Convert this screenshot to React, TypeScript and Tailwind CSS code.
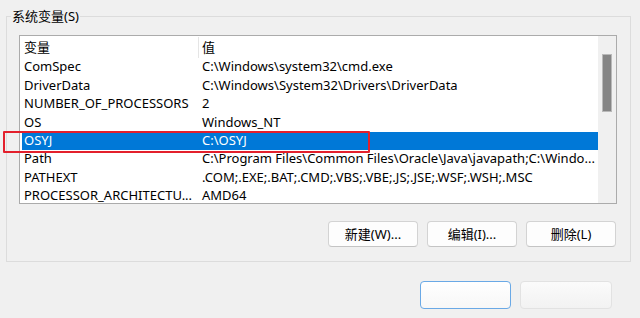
const rows: [string, string][] = [
  ['ComSpec', 'C:\\Windows\\system32\\cmd.exe'],
  ['DriverData', 'C:\\Windows\\System32\\Drivers\\DriverData'],
  ['NUMBER_OF_PROCESSORS', '2'],
  ['OS', 'Windows_NT'],
  ['OSYJ', 'C:\\OSYJ'],
  ['Path', 'C:\\Program Files\\Common Files\\Oracle\\Java\\javapath;C:\\Windo...'],
  ['PATHEXT', '.COM;.EXE;.BAT;.CMD;.VBS;.VBE;.JS;.JSE;.WSF;.WSH;.MSC'],
  ['PROCESSOR_ARCHITECTU...', 'AMD64'],
]

function DlgButton({ label }: { label: string }) {
  return (
    <button className="w-[90px] h-[26px] bg-[#fdfdfd] border border-[#d3d3d3] border-b-[#c4c4c4] rounded-[4px] text-[13px] text-black leading-none">
      {label}
    </button>
  )
}

export default function App() {
  return (
    <div className="relative w-[640px] h-[318px] overflow-hidden bg-[#f0f0f0] pt-[16px] pl-[6px] text-[13px] text-black [font-family:'Noto_Sans','Noto_Sans_CJK_SC',sans-serif]">
      {/* group box */}
      <div className="relative w-[625px] h-[246px] border border-[#dcdcdc] pt-[18px] pl-[12px] pr-[13px]">
        <span className="absolute left-[4px] top-[-10px] px-[1px] bg-[#f0f0f0] leading-[18px]">
          系统变量(S)
        </span>

        <div className="flex h-[169px] border border-[#ababab] bg-white overflow-hidden">
          <div className="flex-1 pl-[2px]">
            <div className="flex h-[22px] items-center pt-[1px]">
              <div className="w-[177px] h-full flex items-center pl-[2px] border-r border-[#e5e5e5]">变量</div>
              <div className="pl-[3px]">值</div>
            </div>
            {rows.map(([name, value]) => {
              const sel = name === 'OSYJ'
              return (
                <div
                  key={name}
                  className={`flex h-[18.4px] items-center whitespace-nowrap ${
                    sel ? 'bg-[#0078d7] text-white' : ''
                  }`}
                >
                  <div className="w-[177px] pl-[2px]">{name}</div>
                  <div className="pl-[3px]">{value}</div>
                </div>
              )
            })}
          </div>
          <div className="w-[18px] bg-[#f0f0f0] pt-[18px] flex justify-center">
            <div className="w-[10px] h-[58px] bg-[#858585] border border-[#b9b9b9]" />
          </div>
        </div>

        <div className="flex justify-end gap-[9px] mt-[17px] pr-[1px]">
          <DlgButton label="新建(W)..." />
          <DlgButton label="编辑(I)..." />
          <DlgButton label="删除(L)" />
        </div>
      </div>

      {/* OK / Cancel (cut off) */}
      <div className="flex justify-end gap-[9px] mt-[19px] pr-[28px]">
        <div className="w-[91px] h-[28px] rounded-[4px] border-[1.5px] border-[#6aa9e6] bg-gradient-to-b from-white to-[#f7f7f7]" />
        <div className="w-[92px] h-[28px] rounded-[4px] border border-[#e2e2e2] bg-gradient-to-b from-[#fbfbfb] to-[#f2f2f2]" />
      </div>

      {/* highlight marker */}
      <div className="absolute left-[3px] top-[131px] w-[367px] h-[22px] border-2 border-[#e3202c] rounded-[1px]" />
    </div>
  )
}
